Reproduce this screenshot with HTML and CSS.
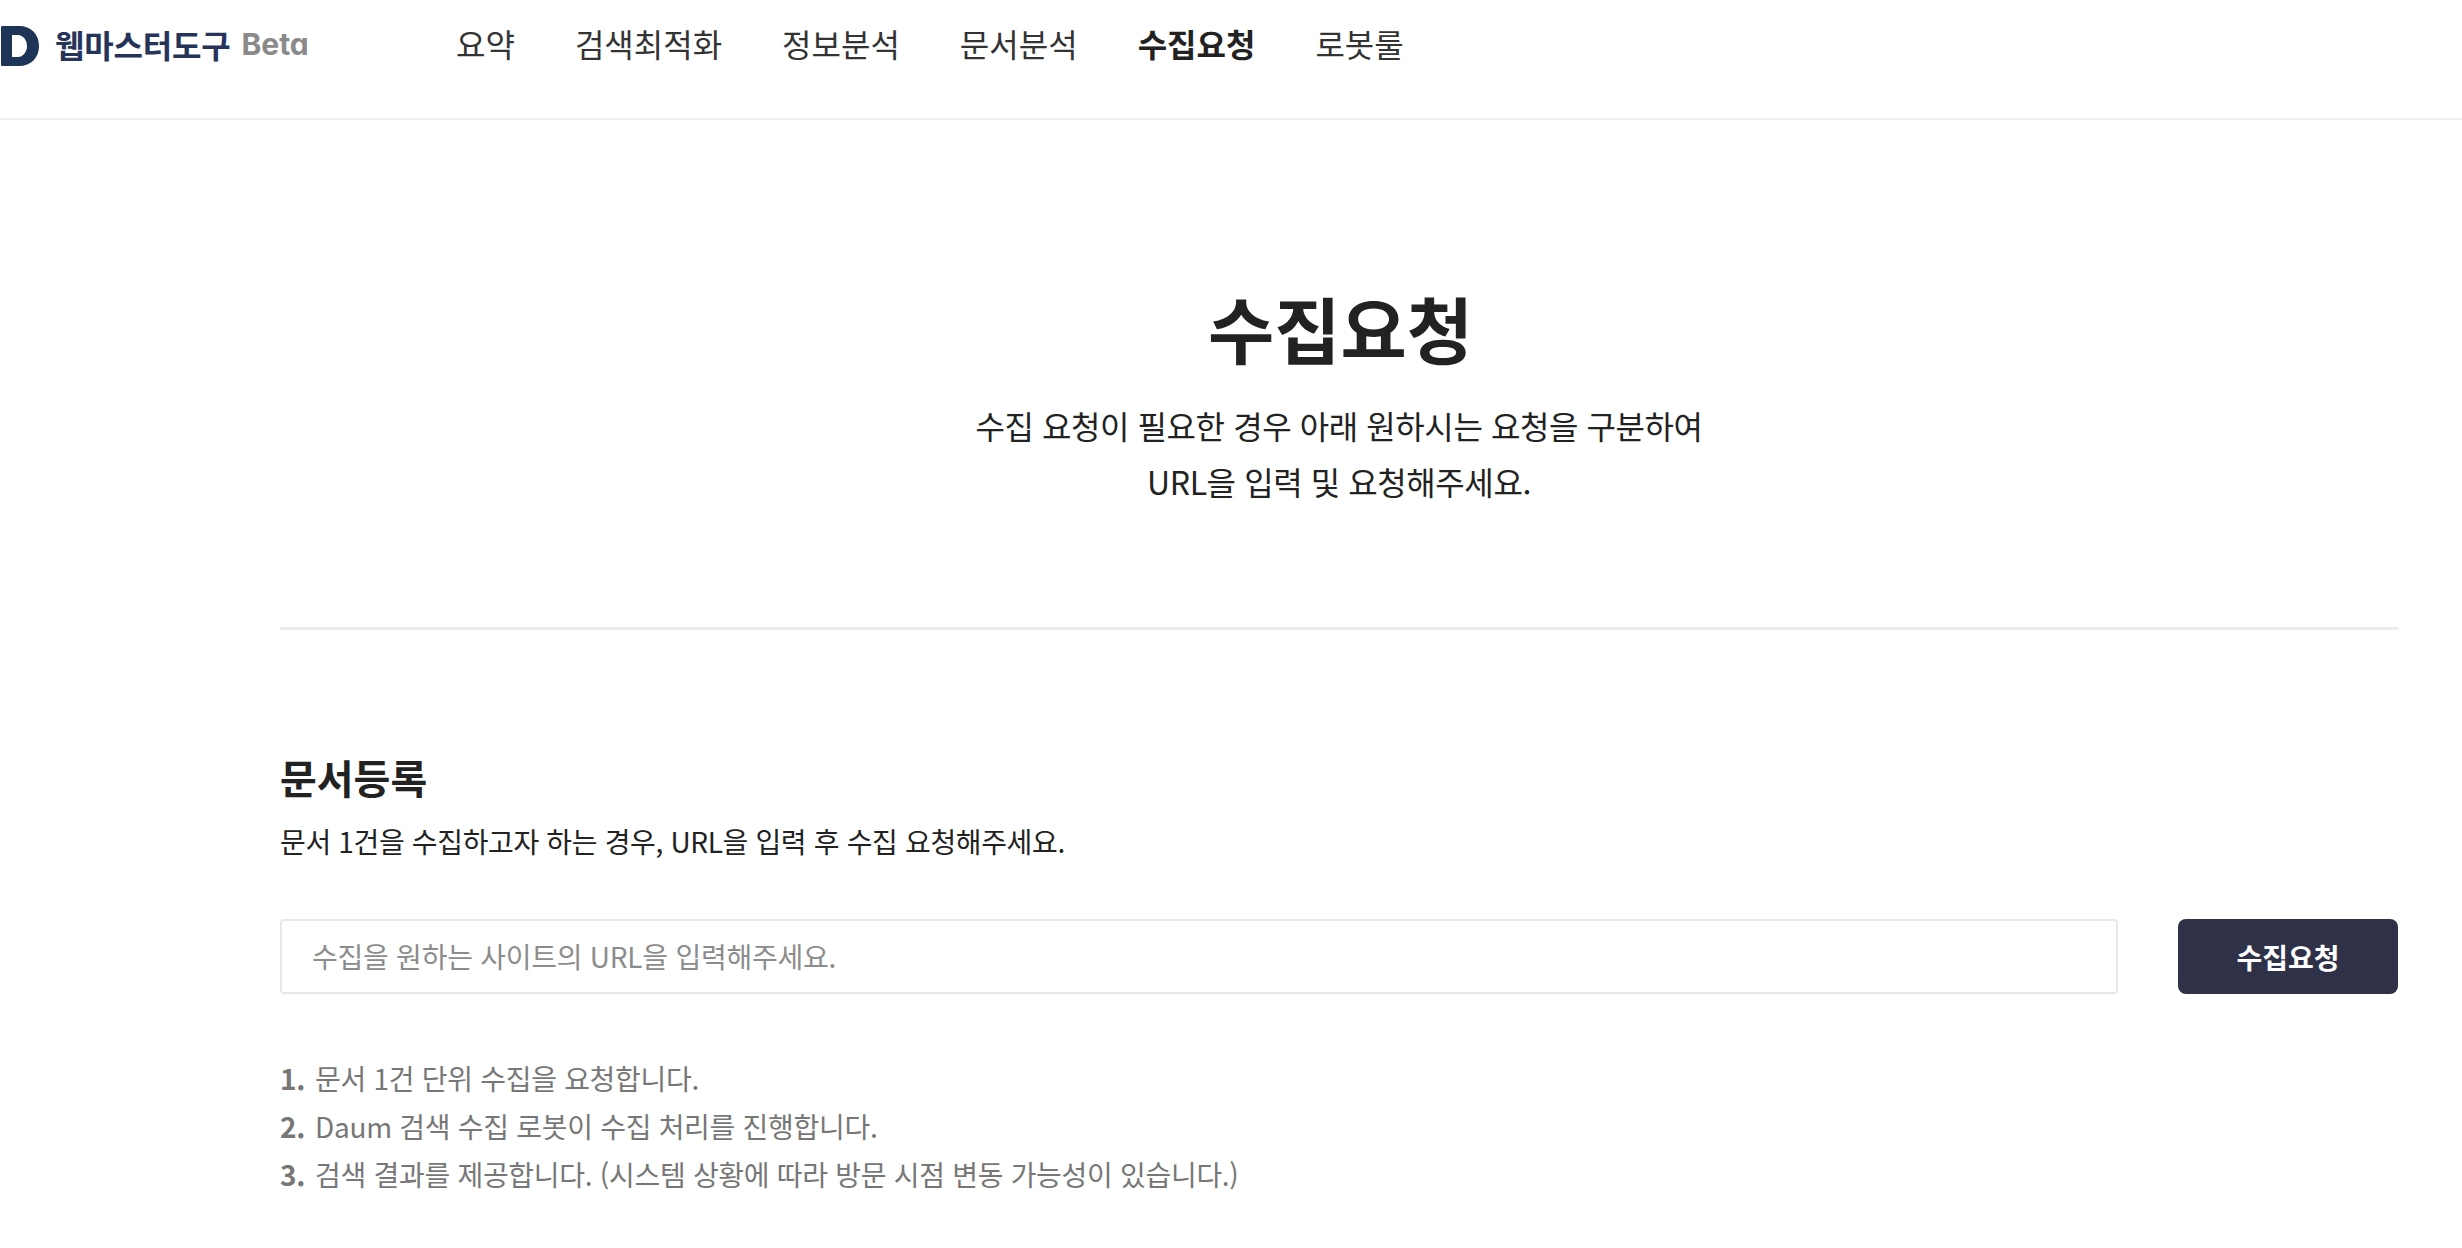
FILE: index.html
```html
<!DOCTYPE html>
<html lang="ko">
<head>
<meta charset="utf-8">
<title>수집요청</title>
<link rel="stylesheet" href="styles.css">
</head>
<body>
<header class="header">
  <a class="logo">
    <svg class="logo-mark" viewBox="0 0 40 40" aria-hidden="true"><path fill-rule="evenodd" fill="#1f3557" d="M2 0H19C31 0 39 8 39 20C39 32 31 40 19 40H2C1 40 1 39 1 38V2C1 1 1 0 2 0ZM12 9V31H18C23 31 27 26 27 20C27 14 23 9 18 9Z"/></svg>
    <span class="logo-name">웹마스터도구</span>
    <span class="logo-beta">Beta</span>
  </a>
  <nav class="nav">
    <a>요약</a>
    <a>검색최적화</a>
    <a>정보분석</a>
    <a>문서분석</a>
    <a class="active">수집요청</a>
    <a>로봇룰</a>
  </nav>
</header>
<main class="main">
  <section class="hero">
    <h1>수집요청</h1>
    <p>수집 요청이 필요한 경우 아래 원하시는 요청을 구분하여<br>URL을 입력 및 요청해주세요.</p>
  </section>
  <section class="section">
    <h2>문서등록</h2>
    <p class="desc">문서 1건을 수집하고자 하는 경우, URL을 입력 후 수집 요청해주세요.</p>
    <form class="form">
      <input class="input" type="text" placeholder="수집을 원하는 사이트의 URL을 입력해주세요.">
      <button class="btn" type="button">수집요청</button>
    </form>
    <ol class="steps">
      <li>문서 1건 단위 수집을 요청합니다.</li>
      <li>Daum 검색 수집 로봇이 수집 처리를 진행합니다.</li>
      <li>검색 결과를 제공합니다. (시스템 상황에 따라 방문 시점 변동 가능성이 있습니다.)</li>
    </ol>
  </section>
</main>
</body>
</html>
```
FILE: styles.css
```css
* { box-sizing: border-box; }
html, body { margin: 0; padding: 0; background: #fff; }
body {
  font-family: "Noto Sans CJK KR", "Noto Sans", sans-serif;
  color: #222;
  height: 1248px;
  overflow: hidden;
}
.header {
  display: flex;
  align-items: center;
  height: 120px;
  padding-bottom: 30px;
  border-bottom: 2px solid #eeeeee;
}
.logo {
  display: flex;
  align-items: center;
  width: 456px;
  flex: none;
}
.logo-mark { width: 40px; height: 40px; flex: none; margin-top: 4px; }
.logo-name {
  margin-left: 15px;
  font-size: 32px;
  font-weight: 700;
  color: #27345a;
  letter-spacing: -0.2px;
}
.logo-beta {
  margin-left: 11px;
  font-family: Inter, sans-serif;
  font-feature-settings: "cv11";
  font-size: 30px;
  font-weight: 700;
  color: #8a8a8a;
}
.nav {
  display: flex;
  gap: 60px;
  margin-bottom: 2px;
  font-size: 32px;
  color: #333;
}
.nav .active { font-weight: 700; color: #222; }
.main { padding: 0 64px 0 280px; }
.hero {
  text-align: center;
  padding: 157px 0 0 3px;
  height: 510px;
  border-bottom: 3px solid #ececec;
}
.hero h1 {
  margin: 0;
  font-size: 72px;
  font-weight: 700;
  line-height: 100px;
  color: #222;
}
.hero p {
  margin: 20px 0 0;
  padding-right: 3px;
  font-size: 32px;
  line-height: 56px;
  letter-spacing: -0.42px;
  color: #222;
}
.section { padding-top: 119px; }
.section h2 {
  margin: 0;
  font-size: 40px;
  font-weight: 700;
  line-height: 56px;
  color: #222;
}
.desc {
  margin: 12px 0 0;
  font-size: 28px;
  line-height: 48px;
  letter-spacing: -0.35px;
  color: #222;
}
.form {
  display: flex;
  gap: 60px;
  margin-top: 54px;
}
.input {
  flex: 1;
  height: 75px;
  padding: 0 30px 2px;
  font: inherit;
  font-size: 28px;
  letter-spacing: -0.25px;
  color: #222;
  background: #fff;
  border: 2px solid #e8e8e8;
  border-radius: 4px;
  outline: none;
}
.input::placeholder { color: #8c8c8c; opacity: 1; }
.btn {
  width: 220px;
  height: 75px;
  flex: none;
  font: inherit;
  font-size: 28px;
  font-weight: 700;
  color: #fff;
  background: #2e3147;
  border: 0;
  border-radius: 8px;
}
.steps {
  margin: 60px 0 0;
  padding: 0;
  list-style: none;
  counter-reset: step;
  font-size: 28px;
  line-height: 48px;
  letter-spacing: -0.3px;
  color: #777;
}
.steps li { counter-increment: step; display: flex; gap: 10px; }
.steps li::before { content: counter(step) "."; font-weight: 700; }
```
